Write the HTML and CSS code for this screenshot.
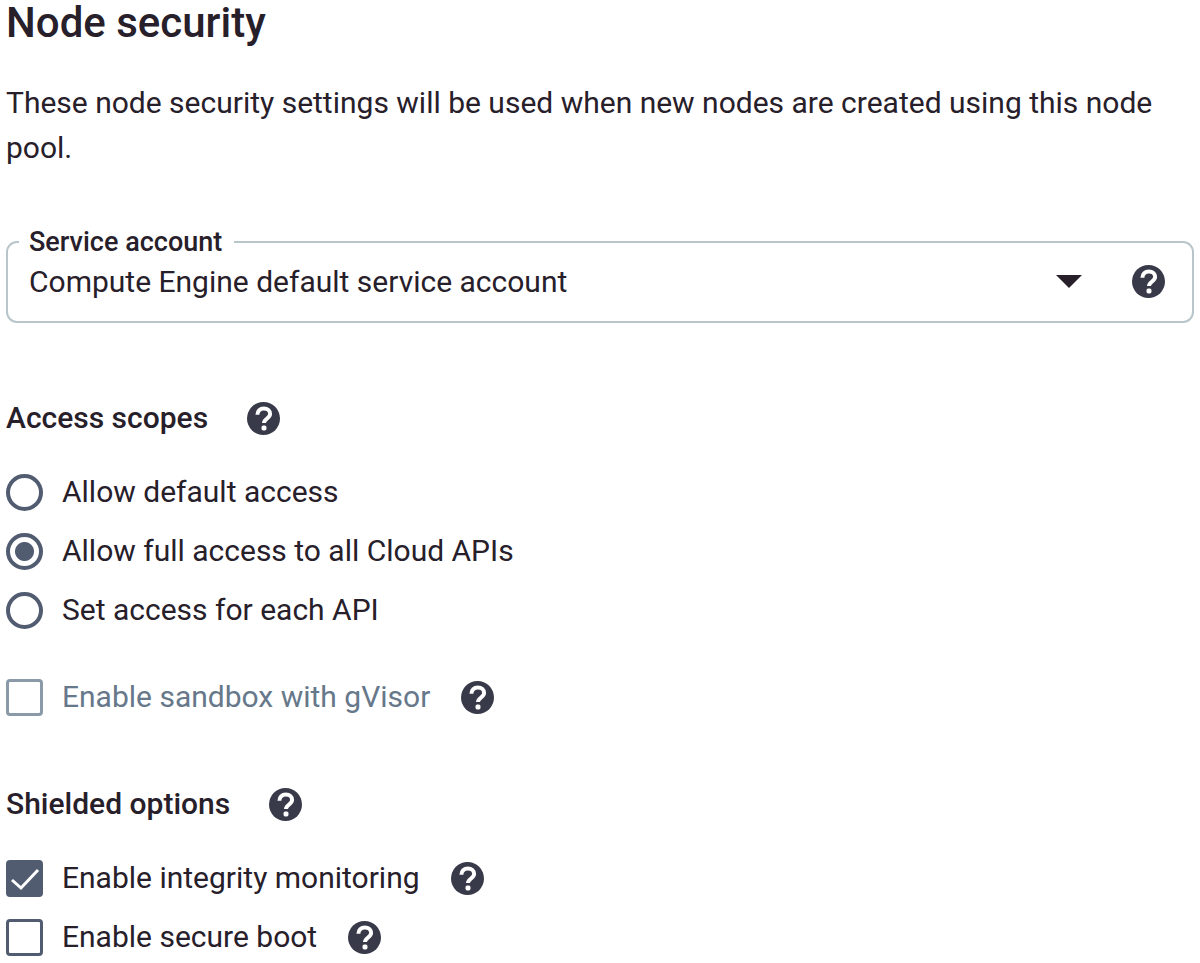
FILE: index.html
```html
<!DOCTYPE html>
<html lang="en">
<head>
<meta charset="utf-8">
<meta name="viewport" content="width=device-width, initial-scale=1">
<title>Node security</title>
<link rel="stylesheet" href="styles.css">
</head>
<body>
<svg class="defs" aria-hidden="true">
  <symbol id="help" viewBox="0 0 20 20">
    <circle cx="10" cy="10" r="10" fill="#383a49"/>
    <path d="M6.3 7.8C6.3 5.4 7.9 4 10.2 4s3.8 1.3 3.8 3.3c0 2.6-3.7 2.8-3.7 5.5" fill="none" stroke="#fff" stroke-width="2.4"/>
    <rect x="8.8" y="14.2" width="3" height="3" rx="1" fill="#fff"/>
  </symbol>
</svg>
<main class="page">
  <h1 class="title">Node security</h1>
  <p class="intro">These node security settings will be used when new nodes are created using this node pool.</p>

  <fieldset class="field">
    <legend class="field-legend"><label for="account">Service account</label></legend>
    <div class="field-body">
      <div class="select-wrap">
        <select class="select" id="account"><option>Compute Engine default service account</option></select>
        <svg class="arrow" viewBox="0 0 26 13" aria-hidden="true"><path d="M0 0h26L13 13z" fill="#27202a"/></svg>
      </div>
      <button class="help" type="button" aria-label="Help: Service account"><svg class="help-icon"><use href="#help"/></svg></button>
    </div>
  </fieldset>

  <section class="section">
    <div class="section-head">
      <h2 class="section-title" id="scopes">Access scopes</h2>
      <button class="help" type="button" aria-label="Help: Access scopes"><svg class="help-icon"><use href="#help"/></svg></button>
    </div>
    <div class="options" role="radiogroup" aria-labelledby="scopes">
      <div class="option"><label class="choice"><input class="radio" type="radio" name="scope"><span class="choice-text">Allow default access</span></label></div>
      <div class="option"><label class="choice"><input class="radio" type="radio" name="scope" checked><span class="choice-text">Allow full access to all Cloud APIs</span></label></div>
      <div class="option"><label class="choice"><input class="radio" type="radio" name="scope"><span class="choice-text">Set access for each API</span></label></div>
    </div>
    <div class="option sandbox">
      <label class="choice disabled"><input class="check" type="checkbox" disabled><span class="choice-text">Enable sandbox with gVisor</span></label>
      <button class="help" type="button" aria-label="Help: sandbox"><svg class="help-icon"><use href="#help"/></svg></button>
    </div>
  </section>

  <section class="section">
    <div class="section-head">
      <h2 class="section-title">Shielded options</h2>
      <button class="help" type="button" aria-label="Help: Shielded options"><svg class="help-icon"><use href="#help"/></svg></button>
    </div>
    <div class="options">
      <div class="option">
        <label class="choice"><span class="check-wrap"><input class="check" type="checkbox" checked><svg class="tick" viewBox="0 0 37 37" aria-hidden="true"><path d="M6 20l9 8L32 10" fill="none" stroke="#fff" stroke-width="3"/></svg></span><span class="choice-text">Enable integrity monitoring</span></label>
        <button class="help" type="button" aria-label="Help: integrity monitoring"><svg class="help-icon"><use href="#help"/></svg></button>
      </div>
      <div class="option">
        <label class="choice"><input class="check" type="checkbox"><span class="choice-text">Enable secure boot</span></label>
        <button class="help" type="button" aria-label="Help: secure boot"><svg class="help-icon"><use href="#help"/></svg></button>
      </div>
    </div>
  </section>
</main>
</body>
</html>
```
FILE: styles.css
```css
* { box-sizing: border-box; }

body {
  margin: 0;
  background: #fff;
  color: #27202a;
  font-family: Roboto, "Liberation Sans", sans-serif;
  font-size: 30px;
  line-height: 45px;
}

.defs { position: absolute; width: 0; height: 0; }
.page { padding: 0 6px; }

.title { margin: 0 0 34px; font-size: 42px; line-height: 46px; font-weight: 500; }
.intro { margin: 0 0 57px; }

.field {
  min-width: 0;
  margin: 0 0 75px;
  padding: 0 27px 15px 11px;
  border: 2px solid #b8c5cb;
  border-radius: 11px;
}
.field-legend { padding: 0 12px 0 10px; font-size: 27px; line-height: 30px; font-weight: 500; }
.field-body { display: flex; align-items: center; gap: 50px; padding-left: 10px; }
.select-wrap { display: grid; flex: 1; align-items: center; min-width: 0; }
.select {
  grid-area: 1 / 1;
  width: 100%;
  height: 49px;
  padding: 0 40px 0 0;
  border: 0;
  background: none;
  color: inherit;
  font: inherit;
  appearance: none;
}
.arrow { grid-area: 1 / 1; justify-self: end; width: 26px; height: 13px; pointer-events: none; }

.help { display: flex; padding: 0; border: 0; background: none; cursor: pointer; }
.help-icon { width: 33px; height: 33px; }

.section { margin-bottom: 68px; }
.section:last-child { margin-bottom: 0; }
.section-head { display: flex; align-items: center; gap: 39px; height: 40px; margin-bottom: 36px; }
.section-title { margin: 0; font-size: 30px; line-height: 40px; font-weight: 500; }

.options { display: grid; gap: 22px; }
.option { display: flex; align-items: center; gap: 31px; height: 37px; }
.choice { display: flex; align-items: center; gap: 19px; }
.choice-text { padding-bottom: 2px; line-height: 35px; }
.disabled { color: #66788a; }
.sandbox { margin-top: 50px; }

.radio, .check {
  flex: none;
  width: 37px;
  height: 37px;
  margin: 0;
  border: 4px solid #515c70;
  background: #fff;
  appearance: none;
}
.radio { border-radius: 50%; }
.radio:checked { background: radial-gradient(circle, #515c70 9px, #fff 10px); }
.check { border-width: 3px; border-radius: 4px; }
.check:checked { background: #515c70; }
.check:disabled { border-color: #8b9aa8; }
.check-wrap { display: grid; flex: none; }
.check-wrap .check, .tick { grid-area: 1 / 1; }
.tick { width: 37px; height: 37px; pointer-events: none; }
```
